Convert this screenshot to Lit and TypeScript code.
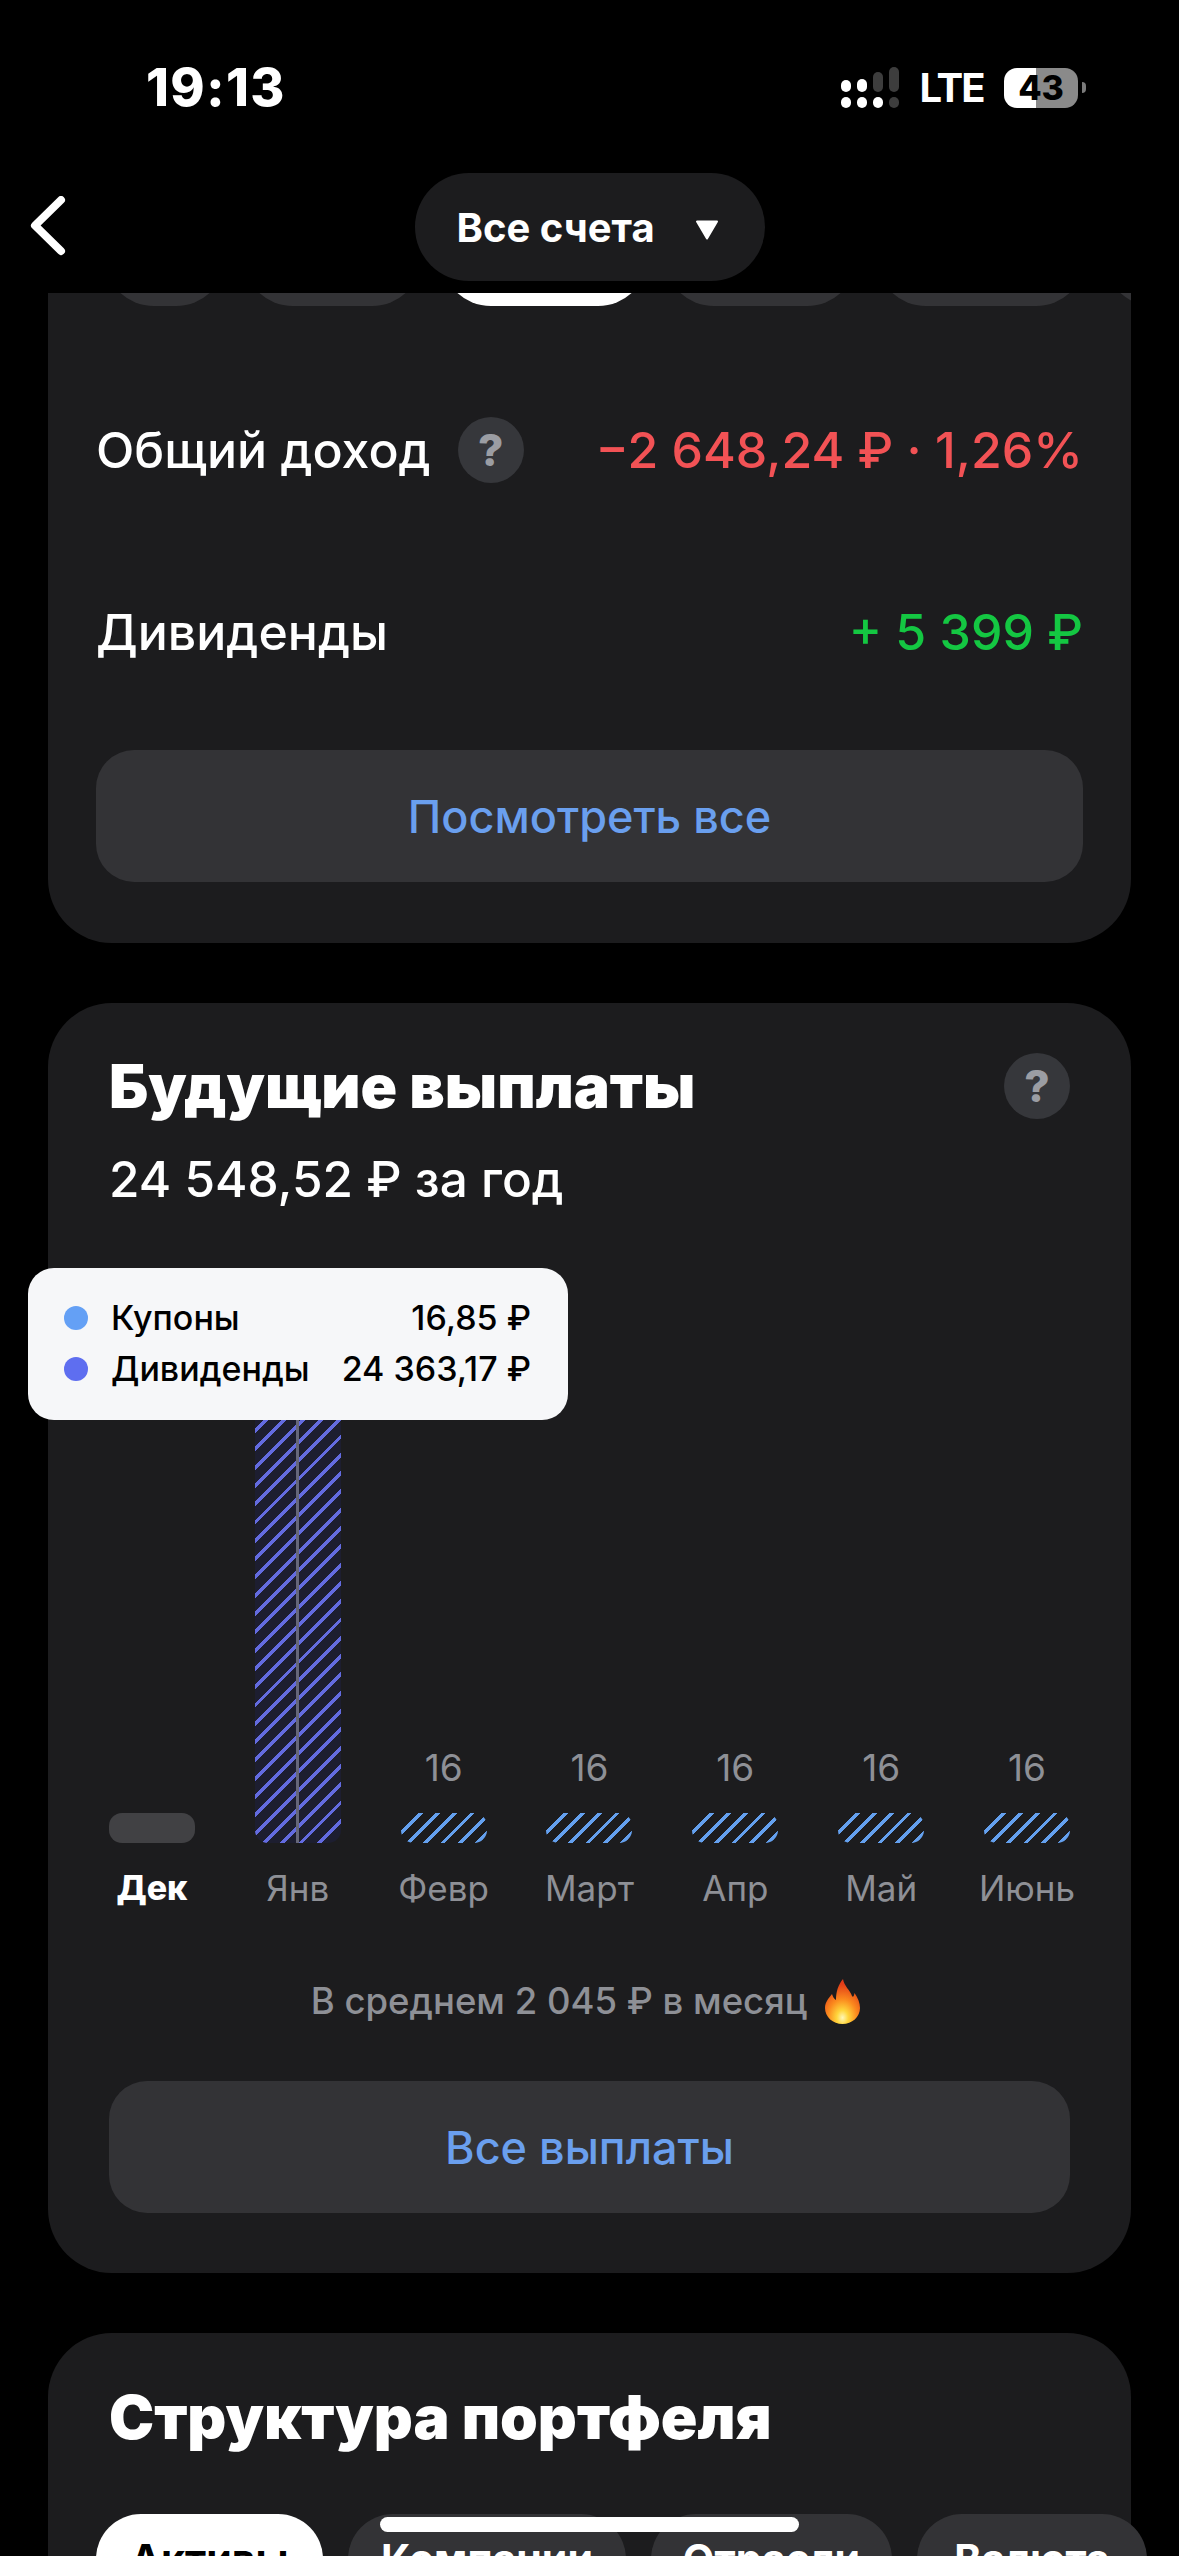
import { LitElement, html, css, nothing } from "lit";
import { customElement } from "lit/decorators.js";

const months = [
  { name: "Дек", active: true, kind: "empty", h: 30, v: "" },
  { name: "Янв", kind: "div", h: 451.5, v: "" },
  { name: "Февр", kind: "cup", h: 30, v: "16" },
  { name: "Март", kind: "cup", h: 30, v: "16" },
  { name: "Апр", kind: "cup", h: 30, v: "16" },
  { name: "Май", kind: "cup", h: 30, v: "16" },
  { name: "Июнь", kind: "cup", h: 30, v: "16" },
];

const tabs = [
  { t: "Активы", w: 227, on: true },
  { t: "Компании", w: 278 },
  { t: "Отрасли", w: 241 },
  { t: "Валюта", w: 230 },
];

const peek: [number, number, boolean][] = [
  [56, 122, false],
  [195, 179, false],
  [393, 207, true],
  [616, 193, false],
  [828, 210, false],
  [1056, 120, false],
];

@customElement("app-root")
export class AppRoot extends LitElement {
  static styles = css`
    :host {
      display: block;
      position: relative;
      width: 1179px;
      height: 2556px;
      overflow: hidden;
      background: #000;
      color: #fff;
      font-family: Inter, "Liberation Sans", sans-serif;
    }
    .status {
      height: 173px;
      box-sizing: border-box;
      padding: 60px 93px 0 146px;
      display: flex;
      justify-content: space-between;
      align-items: flex-start;
    }
    .time {
      font-size: 52px;
      font-weight: 800;
      line-height: 56px;
      letter-spacing: 1.4px;
    }
    .sys {
      display: flex;
      align-items: center;
      height: 41px;
      margin-top: 7px;
    }
    .lte {
      font-size: 40px;
      font-weight: 700;
      line-height: 41px;
      letter-spacing: -2px;
      margin: 0 20px;
      width: 65px;
      text-align: center;
    }
    .batt {
      width: 74px;
      height: 40px;
      border-radius: 13px;
      background: linear-gradient(90deg, #fff 0 32px, #8a8a8a 32px);
      color: #000;
      font-size: 34px;
      font-weight: 800;
      line-height: 40px;
      text-align: center;
    }
    .nub {
      width: 4px;
      height: 11px;
      margin-left: 4px;
      background: #7a7a7a;
      border-radius: 0 6px 6px 0;
    }
    .nav {
      height: 120px;
      position: relative;
      display: flex;
      justify-content: center;
      align-items: flex-start;
    }
    .back {
      position: absolute;
      left: 30px;
      top: 23px;
    }
    .pill {
      width: 350px;
      height: 108px;
      border-radius: 54px;
      background: #1c1c1e;
      display: flex;
      align-items: center;
      gap: 40px;
      font-size: 40px;
      font-weight: 700;
      padding-left: 42px;
      box-sizing: border-box;
    }
    .pill svg {
      margin-top: 6px;
    }
    .scroll {
      display: flex;
      flex-direction: column;
      gap: 60px;
      padding: 0 48px;
    }
    .card {
      background: #1c1c1e;
      border-radius: 0 0 64px 64px;
      padding: 0 48px 61px;
    }
    .card.full {
      border-radius: 64px;
      padding: 0 61px 60px;
    }
    .peek {
      height: 13px;
      margin: 0 -48px;
      position: relative;
      overflow: hidden;
    }
    .peek i {
      position: absolute;
      bottom: 0;
      height: 100px;
      background: #333336;
      border-radius: 50px;
    }
    .peek i.on {
      background: #fff;
    }
    .row {
      display: flex;
      align-items: center;
      justify-content: space-between;
      font-size: 50px;
      font-weight: 500;
      line-height: 66px;
      white-space: nowrap;
    }
    .row.first {
      margin-top: 111px;
    }
    .row.second {
      margin-top: 116px;
    }
    .lab {
      display: flex;
      align-items: center;
      gap: 27px;
    }
    .red {
      color: #f25255;
    }
    .green {
      color: #14c742;
    }
    .help {
      width: 66px;
      height: 66px;
      border-radius: 50%;
      background: #36373b;
      color: #9b9da3;
      font-size: 44px;
      font-weight: 800;
      line-height: 66px;
      text-align: center;
      flex: none;
    }
    .btn {
      height: 132px;
      border-radius: 38px;
      background: #333336;
      color: #6a9fee;
      font-size: 45px;
      font-weight: 500;
      display: flex;
      align-items: center;
      justify-content: center;
    }
    .first-btn {
      margin-top: 85px;
    }
    .head {
      display: flex;
      justify-content: space-between;
      align-items: center;
      padding-top: 50px;
    }
    h2 {
      margin: 0;
      font-size: 60.5px;
      font-weight: 900;
      line-height: 66px;
      white-space: nowrap;
    }
    .sub {
      font-size: 49.5px;
      font-weight: 500;
      line-height: 60px;
      margin-top: 30px;
      white-space: nowrap;
    }
    .chart {
      height: 649px;
      margin-top: 50px;
      display: grid;
      grid-template-columns: repeat(7, 86px);
      justify-content: space-between;
      align-items: end;
      position: relative;
    }
    .col {
      display: flex;
      flex-direction: column;
      align-items: center;
      width: 86px;
      position: relative;
    }
    .val {
      font-size: 37px;
      line-height: 40px;
      color: #8e9096;
      margin-bottom: 25px;
    }
    .bar {
      width: 86px;
      border-radius: 13px;
      position: relative;
      overflow: hidden;
    }
    .bar.empty {
      background: #414144;
    }
    .bar.div {
      background-color: #1d1e30;
      background-image: repeating-linear-gradient(
        135deg,
        #636be0 0 3.4px,
        transparent 3.4px 12.94px
      );
      border-radius: 0 0 13px 13px;
    }
    .bar.cup {
      background-image: repeating-linear-gradient(
        135deg,
        #64a0ee 0 3.4px,
        transparent 3.4px 12.2px
      );
    }
    .line {
      position: absolute;
      left: 41px;
      top: 0;
      bottom: 0;
      width: 3px;
      background: #66677a;
    }
    .mon {
      font-size: 35px;
      line-height: 40px;
      color: #8e9096;
      margin-top: 25px;
      white-space: nowrap;
    }
    .mon.on {
      color: #fff;
      font-size: 34px;
      font-weight: 800;
    }
    .tip {
      position: absolute;
      left: -81px;
      top: 9px;
      width: 540px;
      height: 152px;
      box-sizing: border-box;
      padding: 24px 37px 0 36px;
      background: #f6f7f9;
      border-radius: 26px;
      color: #000;
      font-size: 34px;
      font-weight: 500;
      display: grid;
      grid-template-columns: 24px 1fr auto;
      column-gap: 23px;
      grid-auto-rows: 51px;
      align-items: center;
      white-space: nowrap;
    }
    .tip .num {
      justify-self: end;
    }
    .dot {
      width: 24px;
      height: 24px;
      border-radius: 50%;
    }
    .dot.a {
      background: #64a0f5;
    }
    .dot.b {
      background: #5e6ef0;
    }
    .avg {
      margin-top: 69px;
      padding-right: 8px;
      font-size: 36.5px;
      line-height: 48px;
      color: #8e9096;
      white-space: nowrap;
      font-weight: 500;
      display: flex;
      justify-content: center;
      align-items: center;
      gap: 18px;
    }
    .second-btn {
      margin-top: 56px;
    }
    .title3 {
      padding-top: 51px;
    }
    .tabs {
      display: flex;
      gap: 25px;
      margin: 64px -70px 0 -13px;
    }
    .tab {
      height: 90px;
      border-radius: 45px;
      background: #333336;
      font-size: 41px;
      font-weight: 700;
      display: flex;
      align-items: center;
      justify-content: center;
      white-space: nowrap;
      flex: none;
    }
    .tab.on {
      background: #fff;
      color: #000;
    }
    .home {
      position: absolute;
      left: 380px;
      top: 2517px;
      width: 419px;
      height: 15px;
      border-radius: 8px;
      background: #fff;
    }
  `;

  private fire() {
    return html`<svg width="35" height="45" viewBox="0 0 35 45" aria-hidden="true">
      <defs>
        <radialGradient id="fl" cx="50%" cy="86%" r="75%">
          <stop offset="0" stop-color="#fff7b8"></stop>
          <stop offset="0.22" stop-color="#ffd63c"></stop>
          <stop offset="0.55" stop-color="#fb8a1e"></stop>
          <stop offset="1" stop-color="#e23c18"></stop>
        </radialGradient>
      </defs>
      <path
        d="M18 0C19 7 25 11 27 17C28 19 29 17 29.5 14C33 19 35 24 35 29C35 38 27 45 17.5 45C8 45 0 38 0 29C0 23 4 19 7 15C8 18 9 20 11 21C11 13 13 6 18 0Z"
        fill="url(#fl)"
      ></path>
    </svg>`;
  }

  render() {
    return html`
      <div class="status">
        <div class="time">19:13</div>
        <div class="sys">
          <svg width="58" height="41" viewBox="0 0 58 41" aria-hidden="true">
            <rect x="0" y="13" width="10" height="12" rx="5" fill="#fff"></rect>
            <rect x="16" y="12" width="10" height="13" rx="5" fill="#fff"></rect>
            <rect x="32" y="5" width="10" height="20" rx="5" fill="#3d3d3d"></rect>
            <rect x="48" y="0" width="10" height="25" rx="5" fill="#3d3d3d"></rect>
            <rect x="0" y="30" width="10" height="11" rx="5" fill="#fff"></rect>
            <rect x="16" y="30" width="10" height="11" rx="5" fill="#fff"></rect>
            <rect x="32" y="30" width="10" height="11" rx="5" fill="#fff"></rect>
            <rect x="48" y="30" width="10" height="11" rx="5" fill="#3d3d3d"></rect>
          </svg>
          <span class="lte">LTE</span>
          <div class="batt">43</div>
          <div class="nub"></div>
        </div>
      </div>
      <div class="nav">
        <svg class="back" width="36" height="60" viewBox="0 0 36 60" aria-hidden="true">
          <path d="M31 4 L5 29.5 L31 55" fill="none" stroke="#fff" stroke-width="8"
            stroke-linecap="round" stroke-linejoin="round"></path>
        </svg>
        <div class="pill">
          <span>Все счета</span>
          <svg width="24" height="20" viewBox="0 0 24 20" aria-hidden="true">
            <path d="M2 1.5h20L12 18.5z" fill="#fff" stroke="#fff" stroke-width="2"
              stroke-linejoin="round"></path>
          </svg>
        </div>
      </div>
      <div class="scroll">
        <section class="card">
          <div class="peek">
            ${peek.map(
              ([x, w, on]) =>
                html`<i class=${on ? "on" : ""} style="left:${x}px;width:${w}px"></i>`
            )}
          </div>
          <div class="row first">
            <span class="lab">Общий доход <span class="help">?</span></span>
            <span class="red">−2 648,24 ₽ · 1,26%</span>
          </div>
          <div class="row second">
            <span>Дивиденды</span>
            <span class="green">+ 5 399 ₽</span>
          </div>
          <div class="btn first-btn">Посмотреть все</div>
        </section>

        <section class="card full">
          <div class="head">
            <h2>Будущие выплаты</h2>
            <span class="help">?</span>
          </div>
          <div class="sub">24 548,52 ₽ за год</div>
          <div class="chart">
            ${months.map(
              (m) => html`<div class="col">
                ${m.v ? html`<span class="val">${m.v}</span>` : nothing}
                <div class="bar ${m.kind}" style="height:${m.h}px">
                  ${m.kind === "div" ? html`<div class="line"></div>` : nothing}
                </div>
                <span class="mon ${m.active ? "on" : ""}">${m.name}</span>
              </div>`
            )}
            <div class="tip">
              <span class="dot a"></span><span>Купоны</span><span class="num">16,85 ₽</span>
              <span class="dot b"></span><span>Дивиденды</span><span class="num">24 363,17 ₽</span>
            </div>
          </div>
          <div class="avg"><span>В среднем 2 045 ₽ в месяц</span>${this.fire()}</div>
          <div class="btn second-btn">Все выплаты</div>
        </section>

        <section class="card full">
          <h2 class="title3">Структура портфеля</h2>
          <div class="tabs">
            ${tabs.map(
              (t) =>
                html`<div class="tab ${t.on ? "on" : ""}" style="width:${t.w}px">${t.t}</div>`
            )}
          </div>
        </section>
      </div>
      <div class="home"></div>
    `;
  }
}
